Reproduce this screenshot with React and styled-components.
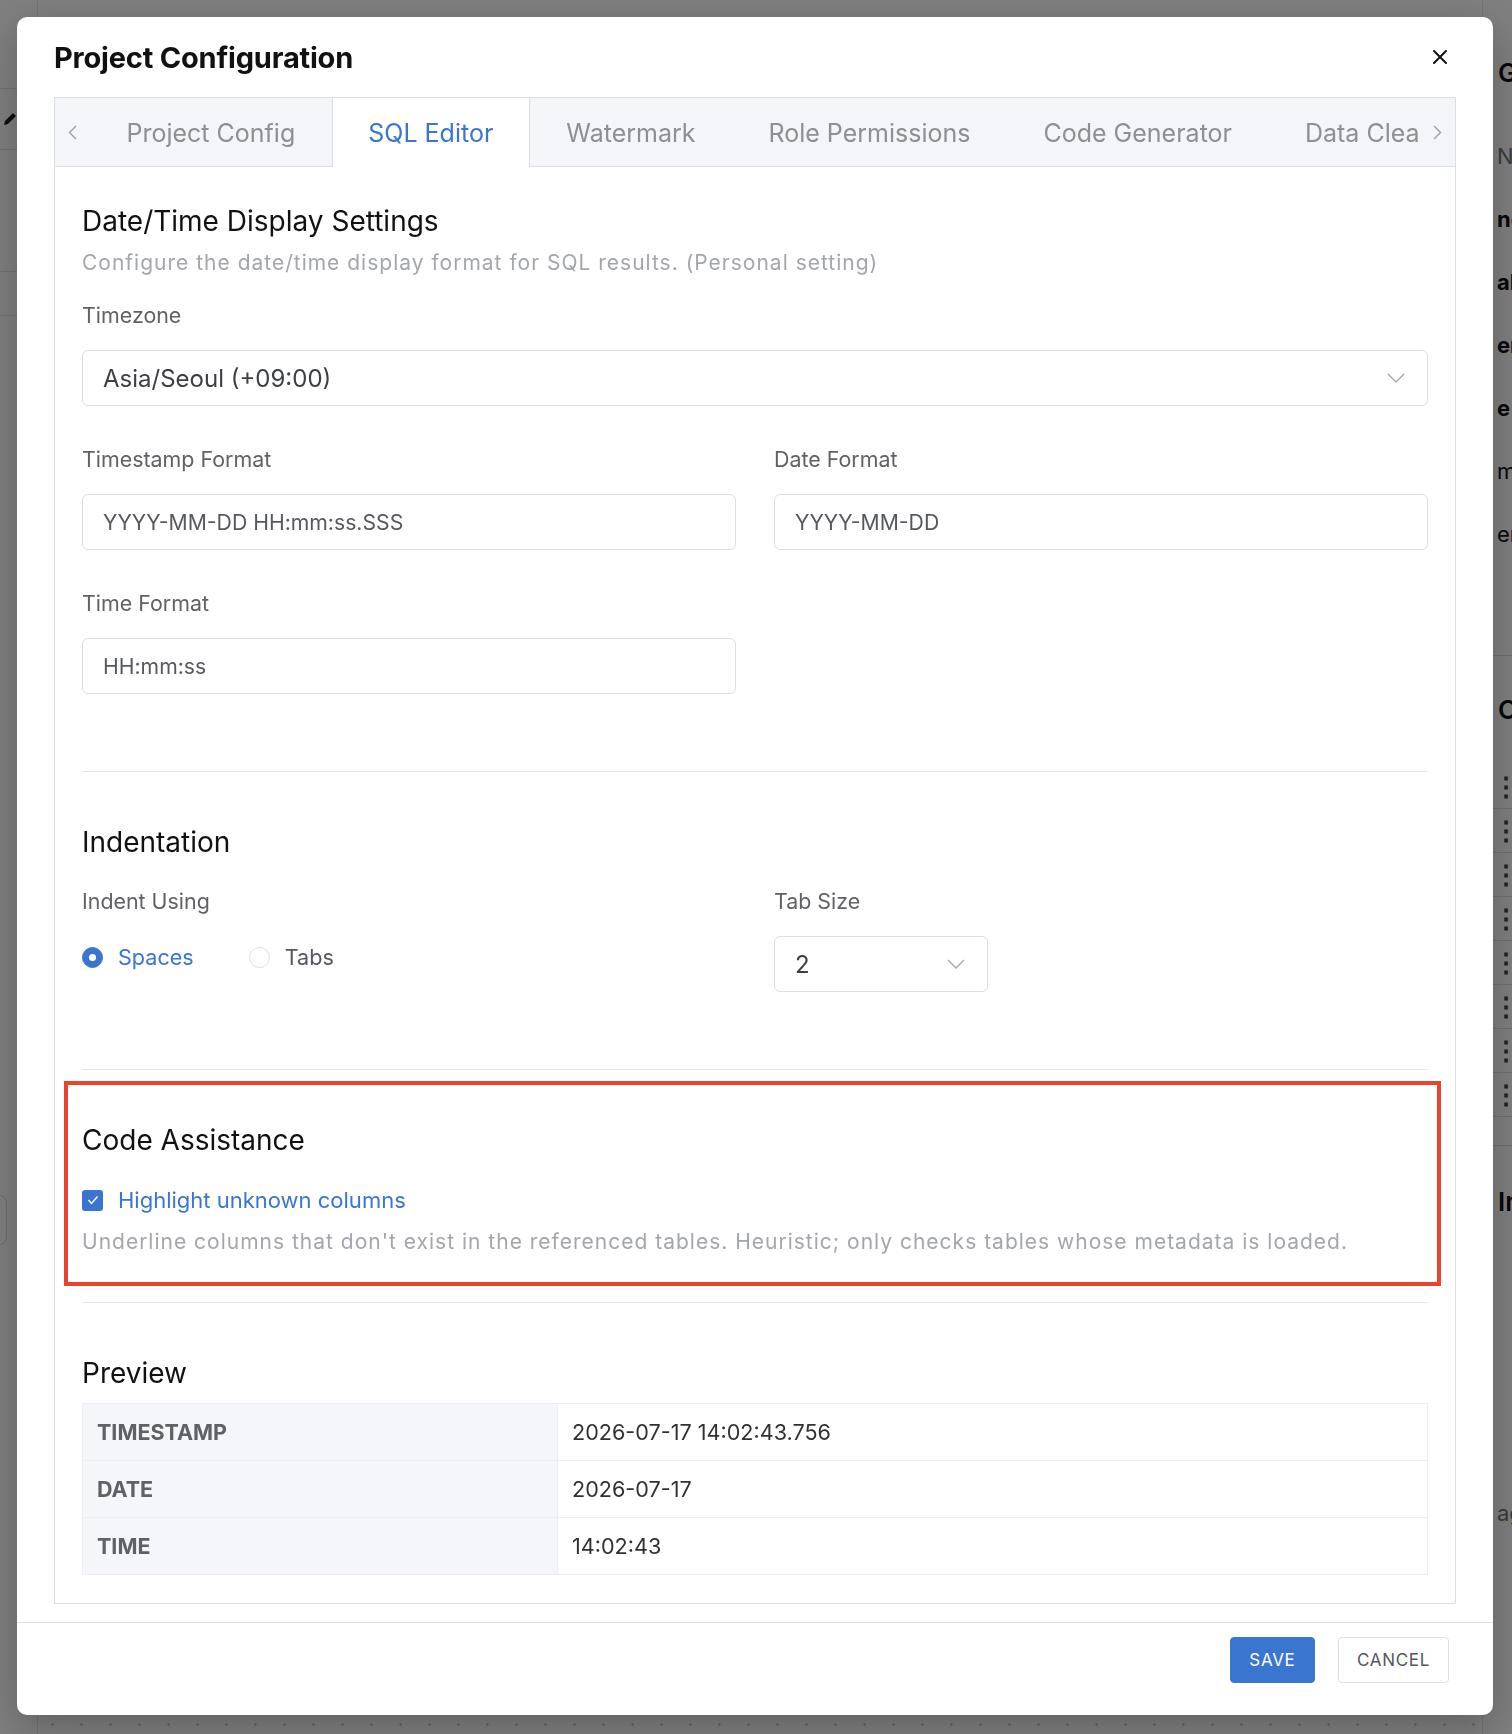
import React from 'react';
import styled, { createGlobalStyle } from 'styled-components';

const GlobalStyle = createGlobalStyle`
  * { box-sizing: border-box; }
  html, body { margin: 0; padding: 0; }
  body {
    font-family: Inter, "Noto Sans", "Liberation Sans", sans-serif;
    background: #808080;
    -webkit-font-smoothing: antialiased;
  }
`;

/* ---------- background application (under the dimming overlay) ---------- */

const AppShell = styled.div`
  width: 1512px;
  height: 1734px;
  overflow: hidden;
  background: #ffffff;
  display: grid;
  grid-template-columns: 38px 1fr 30px;
`;

const SideRail = styled.aside`
  border-right: 1px solid #e6e6e6;
  display: flex;
  flex-direction: column;
  padding-top: 88px;
`;

const RailItem = styled.div`
  height: ${p => p.$h}px;
  border-top: 1px solid #e4e4e4;
  display: flex;
  align-items: center;
  padding-left: 2px;
  color: #222;
`;

const RailCard = styled.div`
  height: 50px;
  margin: 0 30px 0 -10px;
  border: 1px solid #d8d8d8;
  border-radius: 8px;
`;

const MainArea = styled.main`
  display: flex;
  flex-direction: column;
  justify-content: flex-end;
`;

const DotRow = styled.div`
  height: 19px;
  background-image: radial-gradient(circle, #c9c9c9 1px, transparent 1.2px);
  background-size: 29px 19px;
  background-position: 0 0;
`;

const SidePanel = styled.aside`
  display: flex;
  flex-direction: column;
  padding-top: 55px;
  white-space: nowrap;
  overflow: hidden;
  border-left: 1px solid #e6e6e6;
`;

const PanelHeading = styled.div`
  font-size: 26px;
  line-height: 36px;
  font-weight: 600;
  color: #111;
  padding-left: 15px;
  margin-top: ${p => p.$mt || 0}px;
`;

const PanelField = styled.div`
  height: 63px;
  flex: none;
  display: flex;
  align-items: center;
  padding-left: 14px;
  font-size: 22px;
  font-weight: ${p => (p.$bold ? 700 : 400)};
  color: ${p => (p.$muted ? '#777' : '#111')};
  margin-top: ${p => p.$mt || 0}px;
`;

const PanelDivider = styled.div`
  height: 1px;
  flex: none;
  background: #dddddd;
  margin-top: ${p => p.$mt}px;
`;

const HandleList = styled.div`
  margin-top: 37px;
  display: flex;
  flex-direction: column;
`;

const HandleRow = styled.div`
  height: 44px;
  border-bottom: 1px solid #e2e2e2;
  display: flex;
  align-items: center;
  padding-left: 10px;
  color: #444;
  font-size: 26px;
  font-weight: 700;
  line-height: 1;
`;

/* ---------- overlay + dialog ---------- */

const Overlay = styled.div`
  position: fixed;
  inset: 0;
  background: rgba(0, 0, 0, 0.5);
  padding: 17px 19px 19px 17px;
  display: flex;
`;

const Dialog = styled.div`
  width: 1476px;
  height: 1698px;
  background: #ffffff;
  border-radius: 10px;
  display: flex;
  flex-direction: column;
  box-shadow: 0 12px 40px rgba(0, 0, 0, 0.25);
`;

const DialogHeader = styled.header`
  height: 80px;
  padding: 0 46px 0 37px;
  display: flex;
  align-items: center;
  justify-content: space-between;
`;

const DialogTitle = styled.h2`
  margin: 0;
  font-size: 29px;
  font-weight: 700;
  color: #111;
  letter-spacing: -0.2px;
`;

const CloseButton = styled.button`
  width: 14px;
  height: 14px;
  padding: 0;
  border: 0;
  background: none;
  display: flex;
  cursor: pointer;
`;

const DialogBody = styled.div`
  padding: 0 37px;
`;

const TabPanel = styled.div`
  border: 1px solid #dcdfe6;
`;

const TabStrip = styled.div`
  height: 69px;
  display: flex;
  align-items: stretch;
  background: #f4f5f9;
  box-shadow: inset 0 -1px 0 #dcdfe6;
`;

const NavArrow = styled.button`
  width: 35px;
  flex: none;
  border: 0;
  background: transparent;
  padding: 0;
  display: flex;
  align-items: center;
  justify-content: center;
  cursor: pointer;
`;

const TabScroller = styled.div`
  flex: 1;
  display: flex;
  overflow: hidden;
`;

const Tab = styled.div`
  flex: none;
  padding: 0 35.5px;
  display: flex;
  align-items: center;
  font-size: 25px;
  color: ${p => (p.$active ? '#3a76d0' : '#8c8f95')};
  background: ${p => (p.$active ? '#ffffff' : 'transparent')};
  border-left: 1px solid ${p => (p.$active ? '#dcdfe6' : 'transparent')};
  border-right: 1px solid ${p => (p.$active ? '#dcdfe6' : 'transparent')};
  white-space: nowrap;
`;

const TabContent = styled.div`
  padding: 0 27px 28px;
`;

const Section = styled.section`
  position: relative;
  padding: ${p => p.$pt}px 0 ${p => p.$pb}px;
  border-bottom: ${p => (p.$last ? '0' : '1px solid #e4e7ed')};
`;

const Highlight = styled.div`
  position: absolute;
  top: 11px;
  bottom: 16px;
  left: -18px;
  right: -13px;
  border: 4px solid #e8452c;
  pointer-events: none;
`;

const SectionTitle = styled.h3`
  margin: 0;
  font-size: 28px;
  line-height: 32px;
  font-weight: 400;
  color: #111;
`;

const Hint = styled.p`
  margin: ${p => p.$mt}px 0 0;
  font-size: 21px;
  line-height: 26px;
  color: #a3a6ab;
  letter-spacing: 1px;
`;

const FieldLabel = styled.div`
  margin-top: ${p => p.$mt}px;
  font-size: 21.4px;
  line-height: 26px;
  color: #606266;
`;

const FieldGrid = styled.div`
  display: grid;
  grid-template-columns: 1fr 1fr;
  column-gap: 38px;
`;

const Field = styled.div`
  display: flex;
  flex-direction: column;
`;

const SelectBox = styled.div`
  margin-top: 22px;
  width: ${p => p.$w || '100%'};
  height: 56px;
  border: 1px solid #dcdfe6;
  border-radius: 6px;
  padding: 0 22px 0 20px;
  display: flex;
  align-items: center;
  justify-content: space-between;
  font-size: 24px;
  color: #3c3f44;
`;

const TextInput = styled.input`
  margin-top: 22px;
  width: 100%;
  height: 56px;
  border: 1px solid #dcdfe6;
  border-radius: 6px;
  padding: 0 20px;
  font-family: Inter, "Noto Sans", "Liberation Sans", sans-serif;
  font-size: 21.2px;
  color: #55585e;
  background: #fff;
  outline: none;
`;

const RadioGroup = styled.div`
  margin-top: 28px;
  height: 30px;
  display: flex;
  align-items: center;
  gap: 55px;
`;

const RadioOption = styled.label`
  display: flex;
  align-items: center;
  gap: 15px;
  font-size: 21.6px;
  color: ${p => (p.$checked ? '#3a76d0' : '#55585e')};
  cursor: pointer;
`;

const RadioDot = styled.span`
  width: 21px;
  height: 21px;
  border-radius: 50%;
  flex: none;
  background: ${p => (p.$checked ? '#3a76d0' : '#fff')};
  border: 1px solid ${p => (p.$checked ? '#3a76d0' : '#dcdfe6')};
  display: flex;
  align-items: center;
  justify-content: center;
  &::after {
    content: '';
    width: 7px;
    height: 7px;
    border-radius: 50%;
    background: #fff;
    display: ${p => (p.$checked ? 'block' : 'none')};
  }
`;

const CheckRow = styled.label`
  margin-top: 29px;
  height: 30px;
  display: flex;
  align-items: center;
  gap: 15px;
  font-size: 22px;
  color: #3a76d0;
`;

const CheckBox = styled.span`
  width: 21px;
  height: 21px;
  border-radius: 3px;
  background: #3a76d0;
  display: flex;
  align-items: center;
  justify-content: center;
  flex: none;
`;

const PreviewTable = styled.table`
  margin-top: 14px;
  width: 100%;
  border-collapse: collapse;
  border: 1px solid #ebeef5;
`;

const KeyCell = styled.th`
  width: 475px;
  height: 57px;
  padding: 0 14px;
  text-align: left;
  background: #f5f6fa;
  border: 1px solid #ebeef5;
  font-size: 21.5px;
  font-weight: 700;
  color: #5f6166;
`;

const ValueCell = styled.td`
  height: 57px;
  padding: 0 14px;
  border: 1px solid #ebeef5;
  font-size: 21.6px;
  color: #303133;
`;

const DialogFooter = styled.footer`
  margin-top: 18px;
  border-top: 1px solid #dcdfe6;
  padding: 14px 44px 0 0;
  display: flex;
  justify-content: flex-end;
  gap: 23px;
`;

const Button = styled.button`
  height: 46px;
  min-width: ${p => (p.$primary ? 85 : 110)}px;
  padding: 0 18px;
  border-radius: 4px;
  border: 1px solid ${p => (p.$primary ? '#3a75cf' : '#dcdfe6')};
  background: ${p => (p.$primary ? '#3a75cf' : '#fff')};
  color: ${p => (p.$primary ? '#fff' : '#55585e')};
  font-family: Inter, "Noto Sans", "Liberation Sans", sans-serif;
  font-size: 17px;
  letter-spacing: 0.7px;
  cursor: pointer;
`;

/* ---------- icons ---------- */

const CloseIcon = () => (
  <svg width="14" height="14" viewBox="0 0 14 14">
    <path d="M1 1L13 13M13 1L1 13" stroke="#111" strokeWidth="2" strokeLinecap="round" />
  </svg>
);

const Chevron = ({ dir }) => (
  <svg width="9" height="15" viewBox="0 0 9 15">
    <polyline
      points={dir === 'left' ? '8,1 1.5,7.5 8,14' : '1,1 7.5,7.5 1,14'}
      fill="none"
      stroke="#9a9ea6"
      strokeWidth="1.4"
    />
  </svg>
);

const CaretDown = () => (
  <svg width="18" height="10" viewBox="0 0 18 10">
    <polyline points="1,1 9,9 17,1" fill="none" stroke="#a2a6ad" strokeWidth="1.3" />
  </svg>
);

const CheckMark = () => (
  <svg width="12" height="10" viewBox="0 0 12 10">
    <polyline points="1.5,5 4.5,8.5 10.5,1.5" fill="none" stroke="#fff" strokeWidth="1.4" />
  </svg>
);

const Pencil = () => (
  <svg width="16" height="16" viewBox="0 0 16 16">
    <path d="M2 14l1-4 8-8 3 3-8 8z" fill="#222" />
  </svg>
);

/* ---------- data ---------- */

const tabs = ['Project Config', 'SQL Editor', 'Watermark', 'Role Permissions', 'Code Generator', 'Data Cleanup'];

const preview = [
  ['TIMESTAMP', '2026-07-17 14:02:43.756'],
  ['DATE', '2026-07-17'],
  ['TIME', '14:02:43'],
];

const sideFields = [
  ['newtable', true],
  ['able', true],
  ['engine', true],
  ['e', true],
  ['mode', false],
  ['embedded', false],
];

function Background() {
  return (
    <AppShell>
      <SideRail>
        <RailItem $h={61}><Pencil /></RailItem>
        <RailItem $h={122} />
        <RailItem $h={44} />
        <RailItem $h={880} />
        <RailCard />
      </SideRail>
      <MainArea>
        <DotRow />
      </MainArea>
      <SidePanel>
        <PanelHeading>General</PanelHeading>
        <PanelField $muted $mt={33}>Name</PanelField>
        {sideFields.map(([t, b]) => (
          <PanelField key={t} $bold={b}>{t}</PanelField>
        ))}
        <PanelDivider $mt={90} />
        <PanelHeading $mt={36}>Columns</PanelHeading>
        <HandleList>
          {Array.from({ length: 8 }).map((_, i) => (
            <HandleRow key={i}>⋮</HandleRow>
          ))}
        </HandleList>
        <PanelDivider $mt={28} />
        <PanelHeading $mt={38}>Indexes</PanelHeading>
        <PanelField $muted $mt={261}>ago</PanelField>
      </SidePanel>
    </AppShell>
  );
}

export default function App() {
  return (
    <>
      <GlobalStyle />
      <Background />
      <Overlay>
        <Dialog role="dialog" aria-label="Project Configuration">
          <DialogHeader>
            <DialogTitle>Project Configuration</DialogTitle>
            <CloseButton aria-label="Close"><CloseIcon /></CloseButton>
          </DialogHeader>

          <DialogBody>
            <TabPanel>
              <TabStrip>
                <NavArrow aria-label="Previous"><Chevron dir="left" /></NavArrow>
                <TabScroller>
                  {tabs.map(t => (
                    <Tab key={t} $active={t === 'SQL Editor'}>{t}</Tab>
                  ))}
                </TabScroller>
                <NavArrow aria-label="Next"><Chevron dir="right" /></NavArrow>
              </TabStrip>

              <TabContent>
                <Section $pt={38} $pb={77}>
                  <SectionTitle>Date/Time Display Settings</SectionTitle>
                  <Hint $mt={13}>Configure the date/time display format for SQL results. (Personal setting)</Hint>
                  <FieldLabel $mt={26}>Timezone</FieldLabel>
                  <SelectBox>
                    <span>Asia/Seoul (+09:00)</span>
                    <CaretDown />
                  </SelectBox>
                  <FieldGrid>
                    <Field>
                      <FieldLabel $mt={40}>Timestamp Format</FieldLabel>
                      <TextInput readOnly value="YYYY-MM-DD HH:mm:ss.SSS" />
                    </Field>
                    <Field>
                      <FieldLabel $mt={40}>Date Format</FieldLabel>
                      <TextInput readOnly value="YYYY-MM-DD" />
                    </Field>
                    <Field>
                      <FieldLabel $mt={40}>Time Format</FieldLabel>
                      <TextInput readOnly value="HH:mm:ss" />
                    </Field>
                  </FieldGrid>
                </Section>

                <Section $pt={54} $pb={77}>
                  <SectionTitle>Indentation</SectionTitle>
                  <FieldGrid>
                    <Field>
                      <FieldLabel $mt={30}>Indent Using</FieldLabel>
                      <RadioGroup>
                        <RadioOption $checked>
                          <RadioDot $checked />
                          Spaces
                        </RadioOption>
                        <RadioOption>
                          <RadioDot />
                          Tabs
                        </RadioOption>
                      </RadioGroup>
                    </Field>
                    <Field>
                      <FieldLabel $mt={30}>Tab Size</FieldLabel>
                      <SelectBox $w="214px">
                        <span>2</span>
                        <CaretDown />
                      </SelectBox>
                    </Field>
                  </FieldGrid>
                </Section>

                <Section $pt={54} $pb={47}>
                  <SectionTitle>Code Assistance</SectionTitle>
                  <CheckRow>
                    <CheckBox><CheckMark /></CheckBox>
                    Highlight unknown columns
                  </CheckRow>
                  <Hint $mt={14}>
                    Underline columns that don't exist in the referenced tables. Heuristic; only checks tables whose metadata is loaded.
                  </Hint>
                  <Highlight />
                </Section>

                <Section $pt={54} $pb={0} $last>
                  <SectionTitle>Preview</SectionTitle>
                  <PreviewTable>
                    <tbody>
                      {preview.map(([k, v]) => (
                        <tr key={k}>
                          <KeyCell scope="row">{k}</KeyCell>
                          <ValueCell>{v}</ValueCell>
                        </tr>
                      ))}
                    </tbody>
                  </PreviewTable>
                </Section>
              </TabContent>
            </TabPanel>
          </DialogBody>

          <DialogFooter>
            <Button $primary>SAVE</Button>
            <Button>CANCEL</Button>
          </DialogFooter>
        </Dialog>
      </Overlay>
    </>
  );
}
